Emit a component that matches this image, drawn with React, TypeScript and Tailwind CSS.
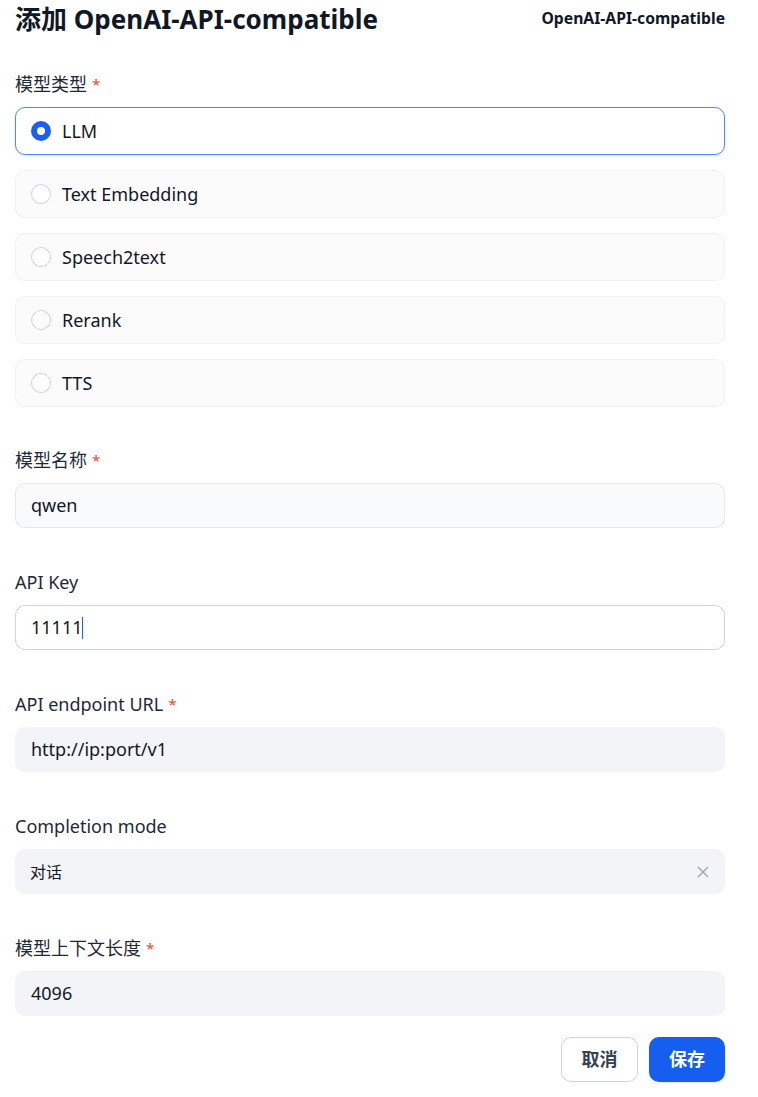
import React from "react";

const font = { fontFamily: '"Noto Sans", "Noto Sans CJK SC", sans-serif' };

function Label({ text, required }: { text: string; required?: boolean }) {
  return (
    <div className="flex items-center h-[26px] text-[18px] text-[#1d2939]">
      <span>{text}</span>
      {required && <span className="ml-[5px] text-[#f04438] text-[15px]">*</span>}
    </div>
  );
}

function RadioCard({ label, selected }: { label: string; selected?: boolean }) {
  return (
    <div
      className={
        selected
          ? "flex items-center h-[48px] rounded-[10px] border border-[#5289f6] bg-white shadow-[0_1px_3px_rgba(16,24,40,0.12)] px-[15px]"
          : "flex items-center h-[48px] rounded-[10px] border border-[#f0f1f3] bg-[#fbfbfc] px-[15px]"
      }
    >
      {selected ? (
        <span className="w-[20px] h-[20px] rounded-full border-[6px] border-[#1a5ff0] bg-white" />
      ) : (
        <span className="w-[20px] h-[20px] rounded-full border border-[#d0d5dd] bg-white" />
      )}
      <span className="ml-[11px] text-[18px] text-[#101828]">{label}</span>
    </div>
  );
}

export default function App() {
  return (
    <div className="w-[758px] h-[1097px] bg-white px-[15px] pr-[33px] overflow-hidden" style={font}>
      <div className="flex items-center justify-between h-[38px]">
        <h1 className="text-[26px] font-bold text-[#101828]">添加 OpenAI-API-compatible</h1>
        <span className="text-[15.7px] font-bold text-[#101828]">OpenAI-API-compatible</span>
      </div>

      <div className="mt-[33px]">
        <Label text="模型类型" required />
        <div className="mt-[10px] flex flex-col gap-[15px]">
          <RadioCard label="LLM" selected />
          <RadioCard label="Text Embedding" />
          <RadioCard label="Speech2text" />
          <RadioCard label="Rerank" />
          <RadioCard label="TTS" />
        </div>
      </div>

      <div className="mt-[40px]">
        <Label text="模型名称" required />
        <div className="mt-[10px] h-[45px] rounded-[10px] border border-[#e4e7ec] bg-[#f9fafb] flex items-center px-[15px] text-[18px] text-[#101828]">
          qwen
        </div>
      </div>

      <div className="mt-[41px]">
        <Label text="API Key" />
        <div className="mt-[10px] h-[45px] rounded-[10px] border border-[#d0d5dd] bg-white flex items-center px-[15px] text-[18px] text-[#101828]">
          <span>11111</span>
          <span className="w-[1px] h-[22px] bg-[#1a5ff0]" />
        </div>
      </div>

      <div className="mt-[41px]">
        <Label text="API endpoint URL" required />
        <div className="mt-[10px] h-[45px] rounded-[10px] bg-[#f2f4f7] flex items-center px-[16px] text-[18px] text-[#101828]">
          http://ip:port/v1
        </div>
      </div>

      <div className="mt-[41px]">
        <Label text="Completion mode" />
        <div className="mt-[10px] h-[45px] rounded-[10px] bg-[#f2f4f7] flex items-center justify-between px-[15px] text-[16px] text-[#101828]">
          <span>对话</span>
          <svg width="12" height="12" viewBox="0 0 12 12" className="mr-[1px]">
            <path d="M1 1L11 11M11 1L1 11" stroke="#98a2b3" strokeWidth="1.3" />
          </svg>
        </div>
      </div>

      <div className="mt-[41px]">
        <Label text="模型上下文长度" required />
        <div className="mt-[10px] h-[45px] rounded-[10px] bg-[#f2f4f7] flex items-center px-[16px] text-[18px] text-[#101828]">
          4096
        </div>
      </div>

      <div className="mt-[21px] flex justify-end gap-[11px]">
        <button className="w-[77px] h-[45px] rounded-[10px] border border-[#d0d5dd] bg-white text-[18px] font-bold text-[#344054]">
          取消
        </button>
        <button className="w-[76px] h-[45px] rounded-[10px] bg-[#155eef] text-[18px] font-bold text-white shadow-[0_1px_2px_rgba(16,24,40,0.1)]">
          保存
        </button>
      </div>
    </div>
  );
}
